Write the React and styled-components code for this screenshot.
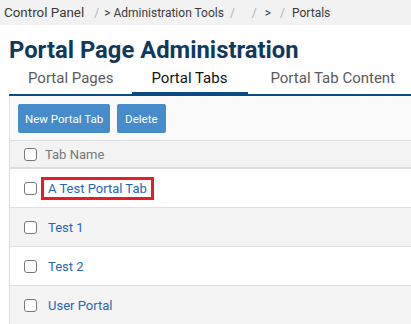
import React from "react";
import styled, { createGlobalStyle } from "styled-components";

const GlobalStyle = createGlobalStyle`
  body {
    margin: 0;
    background: #ffffff;
    font-family: Roboto, "Liberation Sans", sans-serif;
  }
`;

const Page = styled.div`
  width: 411px;
  height: 324px;
  overflow: hidden;
`;

const Breadcrumb = styled.div`
  height: 25px;
  display: flex;
  align-items: center;
  padding-left: 4px;
  background: #f2f2f2;
  font-size: 12px;
  color: #3a3a3a;
  white-space: nowrap;
`;

const Crumb = styled.span`
  color: #3a3a3a;
  font-size: ${(props) => props.size || 12}px;
`;

const Sep = styled.span`
  color: #b0b0b0;
  margin: 0 ${(props) => props.r}px 0 ${(props) => props.l}px;
`;

const Title = styled.h1`
  margin: 11px 0 0;
  padding-left: 9px;
  font-size: 23.8px;
  line-height: 28px;
  font-weight: 700;
  color: #0f3a5e;
  white-space: nowrap;
`;

const Tabs = styled.div`
  display: flex;
  margin-left: 9px;
  border-bottom: 2px solid #0b4a82;
`;

const Tab = styled.div`
  padding: 5px ${(props) => props.pr || 19}px 7px ${(props) => props.pl || 19}px;
  font-size: 15px;
  line-height: 18px;
  color: ${(props) => (props.active ? "#111111" : "#5a5a5a")};
  box-shadow: ${(props) => (props.active ? "inset 0 -2px 0 #0b4a82" : "none")};
  white-space: nowrap;
`;

const Panel = styled.div`
  margin-left: 9px;
  border-left: 1px solid #dddddd;
`;

const Toolbar = styled.div`
  display: flex;
  gap: 7px;
  padding: 8px 8px 7px;
  background: #fafafa;
`;

const Button = styled.button`
  height: 29px;
  padding: 0 ${(props) => props.pad || 8}px;
  border: none;
  border-radius: 2px;
  background: #468cca;
  color: #ffffff;
  font-family: Roboto, "Liberation Sans", sans-serif;
  font-size: 11.5px;
  cursor: pointer;
`;

const HeaderRow = styled.div`
  display: flex;
  align-items: center;
  height: 26px;
  border-top: 1px solid #dddddd;
  border-bottom: 2px solid #dddddd;
  background: #f3f3f3;
  font-size: 13px;
  color: #777777;
`;

const Row = styled.div`
  display: flex;
  align-items: center;
  height: 38px;
  border-bottom: 1px solid #e1e1e1;
  background: ${(props) => (props.shaded ? "#f4f4f4" : "#ffffff")};
  font-size: 13px;
`;

const Check = styled.span`
  width: 11px;
  height: 11px;
  margin-left: 14px;
  border: 1px solid #777777;
  border-radius: 3px;
  background: #ffffff;
  flex-shrink: 0;
`;

const HeadCell = styled.span`
  margin-left: 8px;
`;

const Cell = styled.span`
  margin-left: 11px;
`;

const NameLink = styled.a`
  display: inline-block;
  color: #2468b4;
  text-decoration: none;
  line-height: 15px;
  ${(props) =>
    props.highlight &&
    `
    padding: 1px 4px;
    margin: 0 -4px;
    outline: 3px solid #e41e26;
  `}
`;

const tabsData = [
  { name: "A Test Portal Tab", highlight: true },
  { name: "Test 1" },
  { name: "Test 2" },
  { name: "User Portal" },
];

export default function App() {
  return (
    <Page>
      <GlobalStyle />
      <Breadcrumb>
        <Crumb size={13.4}>Control Panel</Crumb>
        <Sep l={10} r={5}>/</Sep>
        <Crumb>&gt; Administration Tools</Crumb>
        <Sep l={6} r={0}>/</Sep>
        <Sep l={17} r={8}>/</Sep>
        <Crumb>&gt;</Crumb>
        <Sep l={9} r={7}>/</Sep>
        <Crumb>Portals</Crumb>
      </Breadcrumb>
      <Title>Portal Page Administration</Title>
      <Tabs>
        <Tab>Portal Pages</Tab>
        <Tab active pr={21}>Portal Tabs</Tab>
        <Tab pl={22}>Portal Tab Content</Tab>
      </Tabs>
      <Panel>
        <Toolbar>
          <Button pad={7}>New Portal Tab</Button>
          <Button>Delete</Button>
        </Toolbar>
        <HeaderRow>
          <Check />
          <HeadCell>Tab Name</HeadCell>
        </HeaderRow>
        {tabsData.map((t, i) => (
          <Row key={t.name} shaded={i % 2 === 1}>
            <Check />
            <Cell>
              <NameLink href="#" highlight={t.highlight}>
                {t.name}
              </NameLink>
            </Cell>
          </Row>
        ))}
      </Panel>
    </Page>
  );
}
